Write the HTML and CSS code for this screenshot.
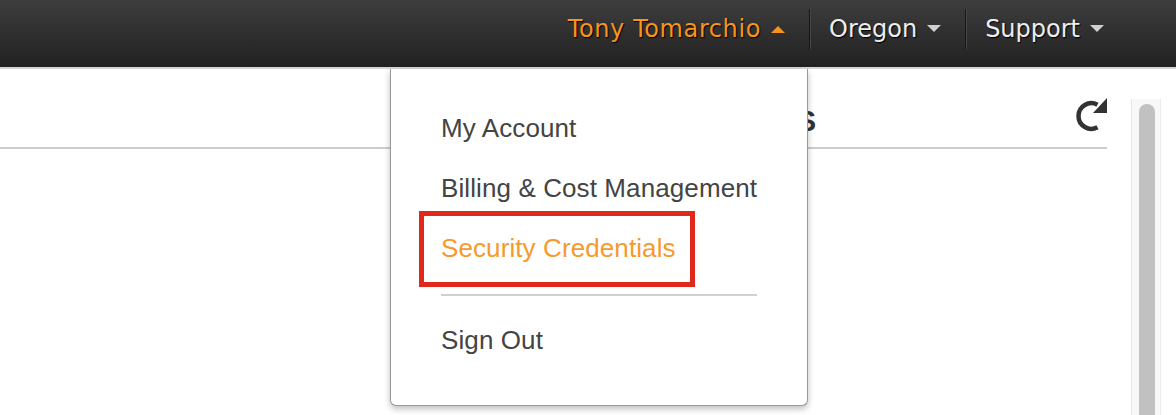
FILE: index.html
```html
<!DOCTYPE html>
<html lang="en">
<head>
<meta charset="utf-8">
<title>Console</title>
<link rel="stylesheet" href="styles.css">
</head>
<body>
<header class="topbar">
  <nav class="nav">
    <div class="nav-item nav-item--active">
      <span class="nav-label">Tony Tomarchio</span>
      <svg class="caret" width="14" height="8" viewBox="0 0 14 8"><polygon points="0,8 7,1 14,8" fill="#f7941e"/></svg>
      <div class="menu">
        <a class="menu-link">My Account</a>
        <a class="menu-link">Billing &amp; Cost Management</a>
        <a class="menu-link menu-link--highlight">Security Credentials</a>
        <div class="menu-sep"></div>
        <a class="menu-link">Sign Out</a>
      </div>
    </div>
    <span class="divider"></span>
    <div class="nav-item">
      <span class="nav-label">Oregon</span>
      <svg class="caret" width="14" height="8" viewBox="0 0 14 8"><polygon points="0,0 14,0 7,7" fill="#d0d0d0"/></svg>
    </div>
    <span class="divider"></span>
    <div class="nav-item nav-item--last">
      <span class="nav-label">Support</span>
      <svg class="caret" width="14" height="8" viewBox="0 0 14 8"><polygon points="0,0 14,0 7,7" fill="#d0d0d0"/></svg>
    </div>
  </nav>
</header>
<main class="main">
  <section class="content">
    <div class="toolbar">
      <h1 class="title">SERVICES</h1>
      <svg class="refresh" width="32" height="34" viewBox="0 0 32 34">
        <path d="M22.5 6.8 A12.8 12.8 0 1 0 22.5 29.2" fill="none" stroke="#333" stroke-width="4.5"/>
        <polygon points="32,0 32,15 18,15" fill="#333"/>
      </svg>
    </div>
  </section>
  <aside class="scrollbar"><div class="thumb"></div></aside>
</main>
</body>
</html>
```

FILE: styles.css
```css
html, body {
  margin: 0;
  padding: 0;
}
body {
  width: 1176px;
  height: 415px;
  overflow: hidden;
  background: #fff;
  font-family: "Liberation Sans", Arial, sans-serif;
}
.topbar {
  height: 67px;
  background: linear-gradient(#3d3d3d, #212121);
  border-bottom: 2px solid #d6d6d6;
  display: flex;
  justify-content: flex-end;
  padding-right: 72px;
  position: relative;
  z-index: 2;
}
.nav {
  display: flex;
  align-items: center;
  height: 57px;
}
.nav-item {
  position: relative;
  display: flex;
  align-items: center;
  gap: 10px;
  height: 57px;
  padding: 0 24px 0 18px;
  font-family: "DejaVu Sans", Verdana, sans-serif;
  font-size: 24px;
  line-height: 28px;
  color: #eeeeee;
  text-shadow: 1px 1px 1px #000;
}
.nav-item--last {
  padding-right: 0;
}
.nav-item--active {
  color: #f7941e;
}
.nav-item--active .nav-label {
  letter-spacing: 0.6px;
}
.caret {
  display: block;
  flex: none;
}
.divider {
  width: 1px;
  height: 40px;
  background: #161616;
  border-right: 1px solid #474747;
}
.menu {
  position: absolute;
  top: 69px;
  right: 1px;
  width: 418px;
  box-sizing: border-box;
  padding: 29px 50px 35px 50px;
  background: #fff;
  border: 1px solid #999;
  border-top: none;
  border-radius: 0 0 6px 6px;
  box-shadow: 0 3px 6px rgba(0, 0, 0, 0.25);
  font-family: "Liberation Sans", Arial, sans-serif;
  text-shadow: none;
  letter-spacing: 0.1px;
}
.menu-link {
  display: block;
  position: relative;
  font-size: 26px;
  line-height: 60px;
  color: #444;
  white-space: nowrap;
}
.menu-link--highlight {
  color: #f7992b;
}
.menu-link--highlight::after {
  content: "";
  position: absolute;
  left: -22px;
  top: -7px;
  width: 276px;
  height: 76px;
  box-sizing: border-box;
  border: 5px solid #e1281c;
}
.menu-sep {
  height: 2px;
  background: #d0d0d0;
  margin: 16px 0 14px;
}
.main {
  display: flex;
  align-items: flex-start;
}
.content {
  width: 1107px;
  flex: none;
}
.toolbar {
  height: 80px;
  box-sizing: border-box;
  border-bottom: 2px solid #cccccc;
  display: flex;
  justify-content: flex-end;
  align-items: flex-start;
  padding-top: 29px;
}
.title {
  margin: 6px 259px 0 0;
  font-size: 29px;
  line-height: 34px;
  font-weight: bold;
  color: #333;
}
.refresh {
  display: block;
  flex: none;
}
.scrollbar {
  margin: 30px 0 0 24px;
  width: 30px;
  height: 320px;
  box-sizing: border-box;
  background: #f8f8f8;
  border-left: 1px solid #e6e6e6;
  border-right: 1px solid #ececec;
  padding: 5px 0 0 7px;
}
.thumb {
  width: 16px;
  height: 320px;
  background: #c1c1c1;
  border-radius: 8px 8px 0 0;
}
```
